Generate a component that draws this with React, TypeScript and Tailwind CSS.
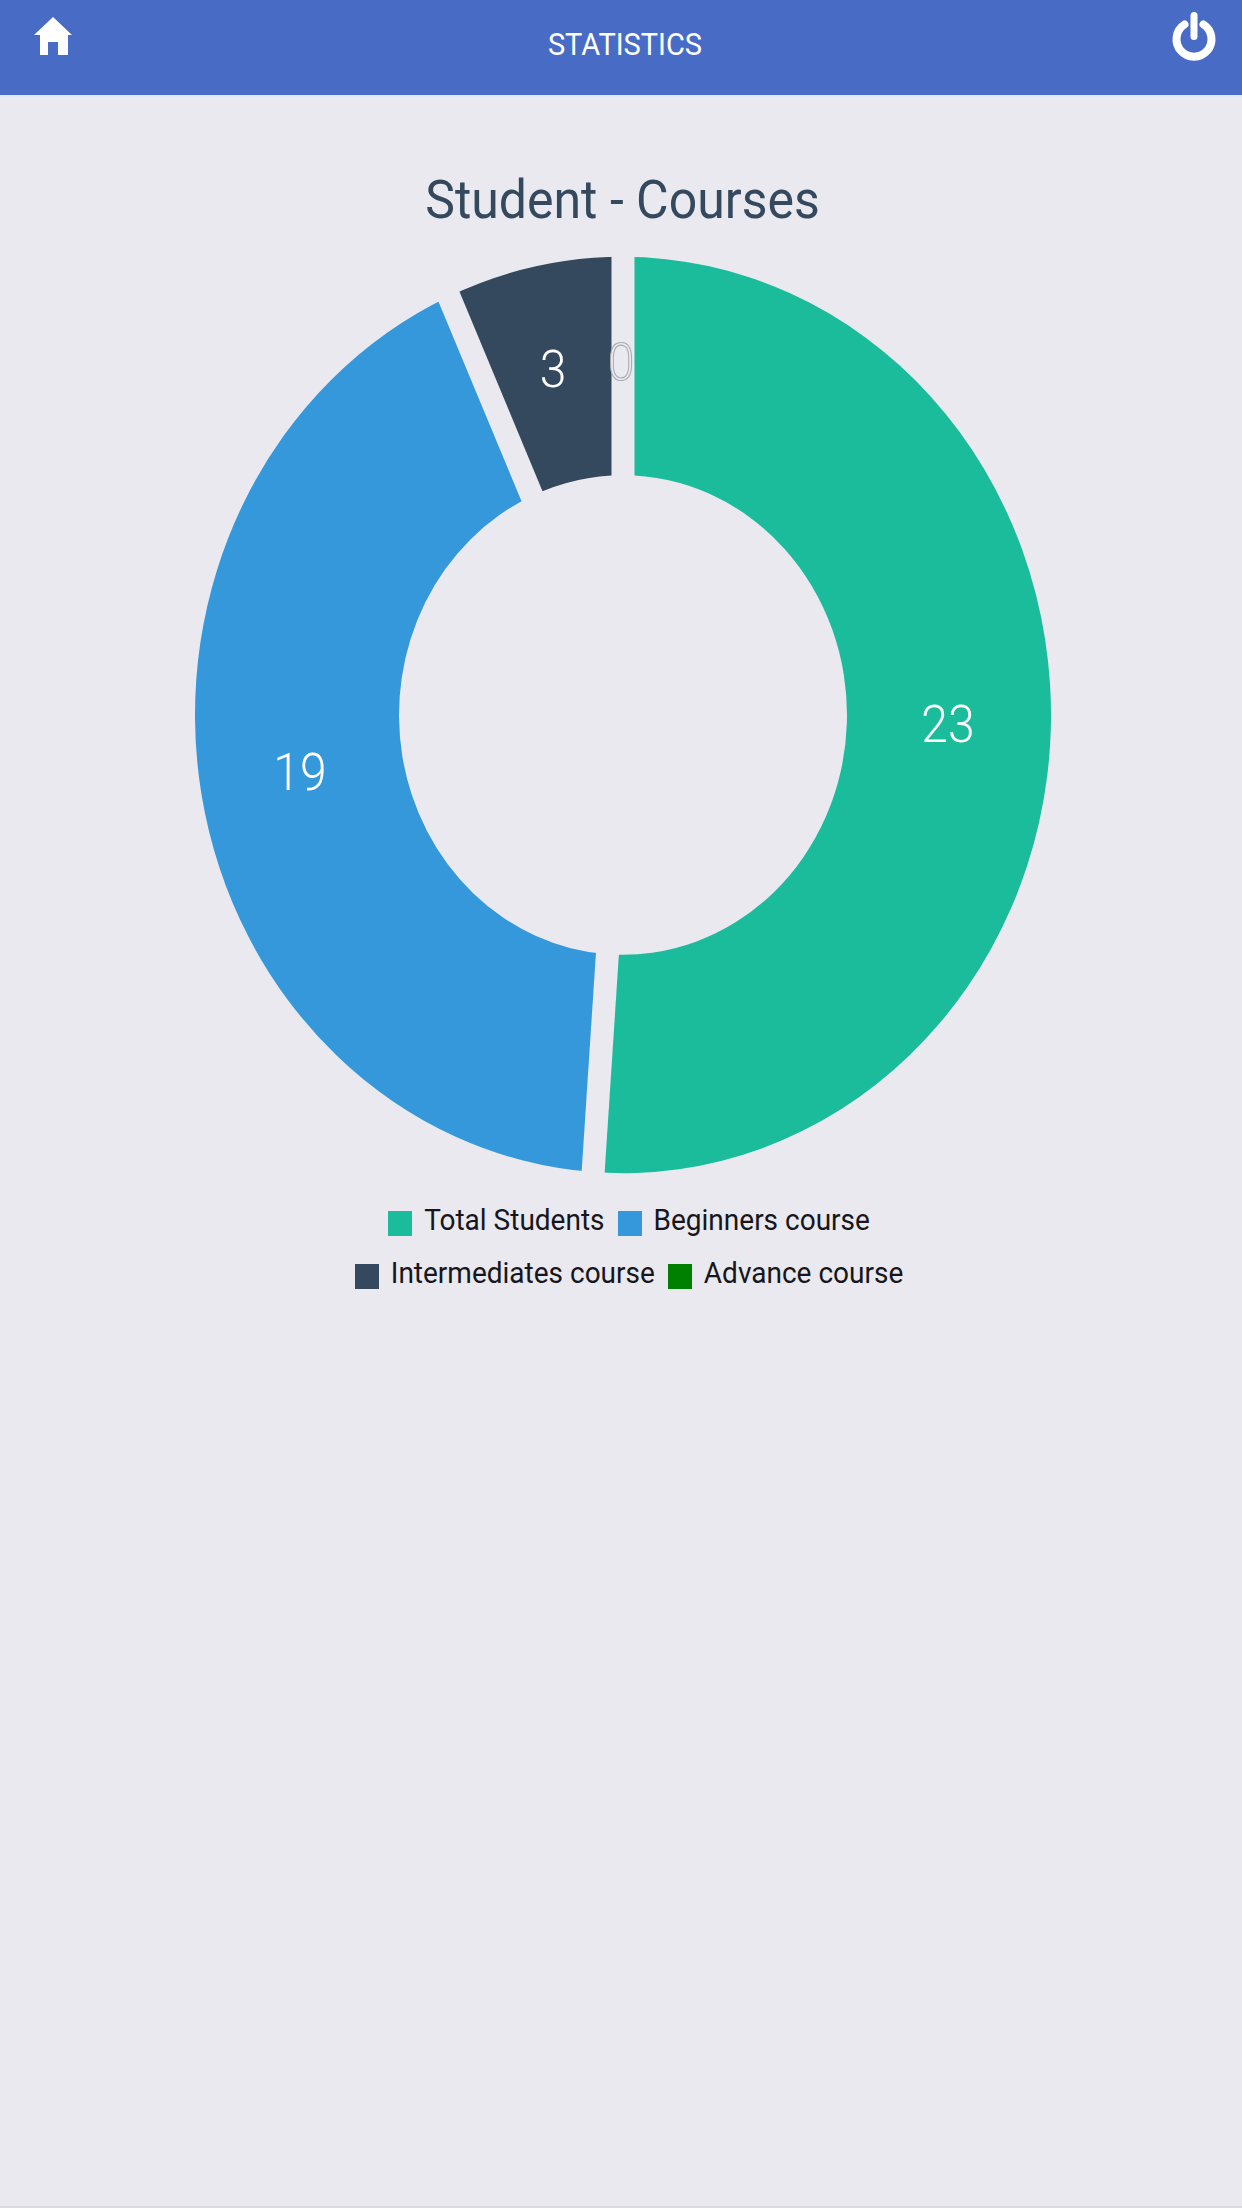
type Slice = {
  label: string;
  value: number;
  color: string;
};

const slices: Slice[] = [
  { label: "Total Students", value: 23, color: "#1abc9c" },
  { label: "Beginners course", value: 19, color: "#3498db" },
  { label: "Intermediates course", value: 3, color: "#34495e" },
  { label: "Advance course", value: 0, color: "#008000" },
];

const CX = 440;
const CY = 440;
const OUTER = 428;
const INNER = 224;
const BG = "#e9e9ef";

const point = (radius: number, deg: number) => {
  const rad = (deg * Math.PI) / 180;
  return [CX + radius * Math.sin(rad), CY - radius * Math.cos(rad)];
};

const slicePath = (start: number, end: number) => {
  const [x1, y1] = point(OUTER, start);
  const [x2, y2] = point(OUTER, end);
  const [x3, y3] = point(INNER, end);
  const [x4, y4] = point(INNER, start);
  const large = end - start > 180 ? 1 : 0;
  return `M${x1} ${y1}A${OUTER} ${OUTER} 0 ${large} 1 ${x2} ${y2}L${x3} ${y3}A${INNER} ${INNER} 0 ${large} 0 ${x4} ${y4}Z`;
};

// the whole chart is a bit taller than wide, hence preserveAspectRatio none
const DonutChart = () => {
  const total = slices.reduce((sum, s) => sum + s.value, 0);
  let angle = 0;
  const arcs = slices.map((s) => {
    const start = angle;
    angle += (s.value / total) * 360;
    return { ...s, start, end: angle };
  });

  return (
    <svg width="880" height="942" viewBox="0 0 880 880" preserveAspectRatio="none" className="block">
      {arcs
        .filter((a) => a.value > 0)
        .map((a) => (
          <path key={a.label} d={slicePath(a.start, a.end)} fill={a.color} />
        ))}
      {arcs
        .filter((a) => a.value > 0)
        .map((a) => {
          const [x, y] = point(OUTER + 10, a.start);
          const [x0, y0] = point(INNER - 10, a.start);
          return (
            <line key={a.label} x1={x0} y1={y0} x2={x} y2={y} stroke={BG} strokeWidth="23" />
          );
        })}
      <g fontFamily="Roboto, sans-serif" fontWeight="300" fontSize="48" textAnchor="middle" fill="#ffffff">
        <text x="765" y="465">23</text>
        <text x="117" y="510">19</text>
        <text x="370" y="134">3</text>
        <text x="438" y="127" fill="#ebebf0" stroke="#a8a8ae" strokeWidth="1">0</text>
      </g>
    </svg>
  );
};

const Legend = () => (
  <div className="w-[600px] flex flex-wrap justify-center gap-x-[13px] gap-y-5 text-[28px] leading-[30px] text-[#16161c]">
    {slices.map((s) => (
      <div key={s.label} className="flex items-center gap-3">
        <span className="w-6 h-[25px] mt-2" style={{ backgroundColor: s.color }} />
        <span className="scale-y-[1.07]">{s.label}</span>
      </div>
    ))}
  </div>
);

export default function App() {
  return (
    <div className="w-[1242px] h-[2208px] bg-[#e9e9ef] overflow-hidden border-b-2 border-[#d9d9de] font-['Roboto',sans-serif]">
      <header className="h-[97px] bg-[#486cc5] border-b-2 border-[#dfe6f5] flex items-start justify-between pl-[33px] pr-[25px]">
        <svg width="40" height="40" viewBox="0 0 40 40" className="mt-[16px]" fill="#ffffff">
          <path fillRule="evenodd" d="M20 1 39 19H35V39H25V26H15V39H7V19H1Z" />
        </svg>
        <h1 className="mt-[28px] ml-[6px] text-[29px] leading-[32px] text-white scale-y-[1.07]">STATISTICS</h1>
        <svg width="46" height="50" viewBox="0 0 46 50" className="mt-[11px]" fill="none" stroke="#ffffff" strokeLinecap="round">
          <path strokeWidth="8" d="M13.5 13.5a17.5 17.5 0 1 0 19 0" />
          <path strokeWidth="7" d="M23 4.5v21" />
        </svg>
      </header>
      <main className="flex flex-col items-center">
        <h2 className="mt-[73px] ml-[3px] text-[50px] leading-[60px] text-[#34495e] scale-y-[1.07]">Student - Courses</h2>
        <div className="mt-[14px] ml-[3px]">
          <DonutChart />
        </div>
        <div className="mt-[17px] ml-4">
          <Legend />
        </div>
      </main>
    </div>
  );
}
